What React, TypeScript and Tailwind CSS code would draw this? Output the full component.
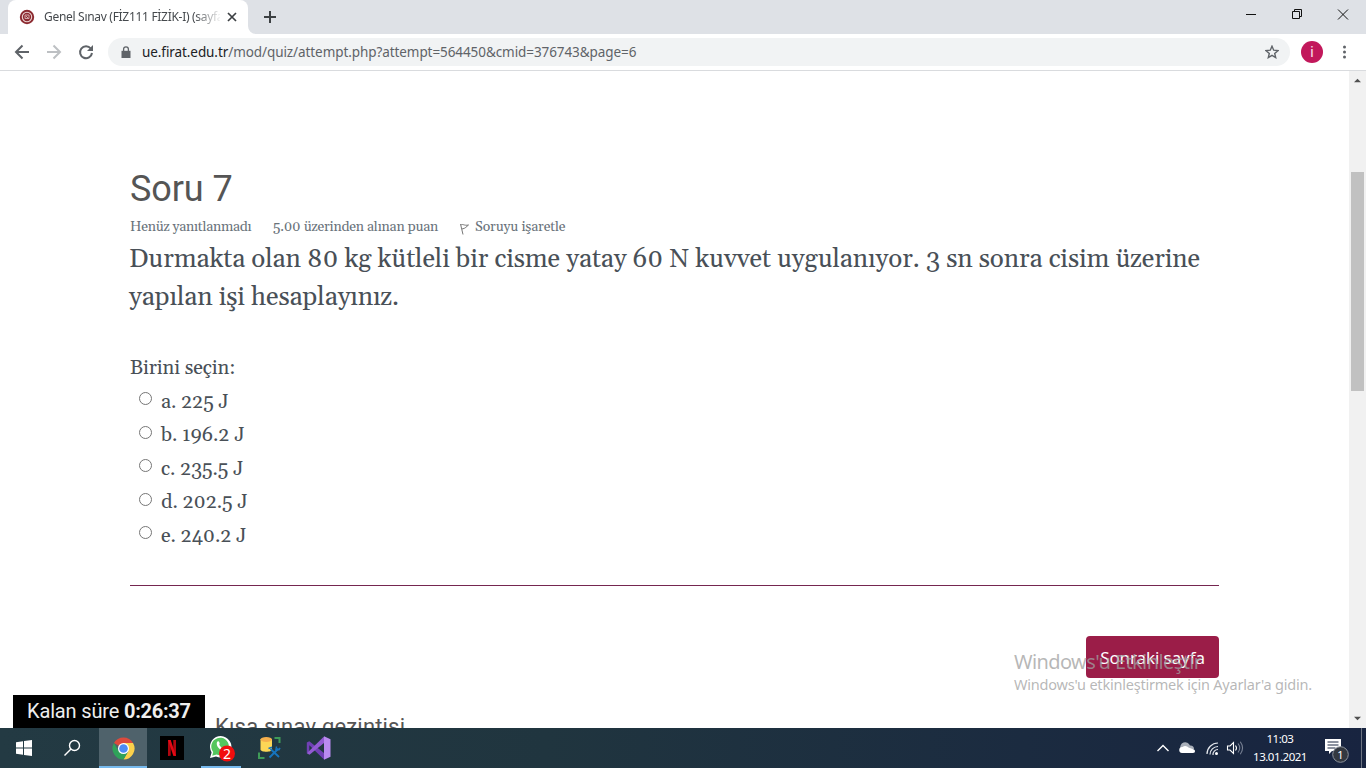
const SERIF = "font-[Gelasio,Georgia,'Liberation_Serif',serif]";
const UI = "font-['Noto_Sans','Open_Sans',sans-serif]";

function TabStrip() {
  return (
    <div className="flex h-[34px] shrink-0 bg-[#dee1e6] pl-2">
      <div className="flex w-[240px] items-center rounded-t-lg bg-white pl-[11px]">
        <svg width="16" height="16" viewBox="0 0 16 16" className="shrink-0">
          <circle cx="8" cy="8" r="7.2" fill="#8c2a30" />
          <circle cx="8" cy="8" r="4.700" fill="none" stroke="#ead2d2" strokeWidth="1.100" />
          <path d="M6 6h4v3.500H6zM7 7l2 2" stroke="#d9b3b3" strokeWidth="0.900" fill="none" />
        </svg>
        <div className="ml-[9px] w-[176px] overflow-hidden whitespace-nowrap text-[12px] tracking-[-0.3px] text-[#45494d] [mask-image:linear-gradient(to_right,black_150px,transparent_178px)]">
          Genel Sınav (FİZ111 FİZİK-I) (sayfa
        </div>
        <svg width="10" height="10" viewBox="0 0 10 10" className="ml-[7px] shrink-0" stroke="#3c4043" strokeWidth="1.700">
          <path d="M1 1l8 8M9 1L1 9" />
        </svg>
      </div>
      <svg width="8" height="34" viewBox="0 0 8 34"><path d="M0 26a8 8 0 0 0 8 8H0z" fill="#fff" /></svg>
      <svg width="14" height="14" viewBox="0 0 14 14" className="mt-[10px] ml-[7px]" stroke="#3c4043" strokeWidth="2">
        <path d="M1 7h12M7 1v12" />
      </svg>
      <svg width="104" height="14" viewBox="0 0 104 14" className="mt-[7px] mr-[17px] ml-auto" stroke="#111" fill="none">
        <path d="M1 7.500h10M47.500 4.500h7v7h-7zM49.500 4.500v-2h7v7h-2M93 2.500l10 10M103 2.500l-10 10" />
      </svg>
    </div>
  );
}

function Toolbar() {
  return (
    <div className="flex h-[37px] shrink-0 items-center border-b border-[#d9dbde] bg-white pl-[14px]">
      <svg width="80" height="18" viewBox="0 0 80 18" fill="none" strokeWidth="2" className="shrink-0">
        <path d="M15 9H2M8.500 2.500L2 9l6.500 6.500" stroke="#5f6368" />
        <path d="M33 9h13M39.500 2.500L46 9l-6.500 6.500" stroke="#bdc0c3" />
        <path d="M76.800 5.500A6 6 0 1 0 78 10" stroke="#5f6368" />
        <path d="M79 2v6h-6z" fill="#5f6368" />
      </svg>
      <div className="ml-[14px] flex h-[28px] w-[1182px] items-center rounded-full bg-[#f1f3f4] pl-[13px]">
        <svg width="10" height="13" viewBox="0 0 10 13"><path d="M0.500 4.800h9V12h-9z" fill="#5f6368" /><path d="M2.600 5V3.300a2.400 2.400 0 0 1 4.800 0V5" fill="none" stroke="#5f6368" strokeWidth="1.300" /></svg>
        <div className="ml-[11px] text-[13.5px] tracking-[-0.08px] whitespace-nowrap text-[#5f6368]">
          <span className="text-[#202124]">ue.firat.edu.tr</span>/mod/quiz/attempt.php?attempt=564450&amp;cmid=376743&amp;page=6
        </div>
        <svg width="14" height="14" viewBox="0 0 14 14" className="mr-[11px] ml-auto" fill="none" stroke="#5f6368" strokeWidth="1.400">
          <path d="M7 1.200l1.700 4 4.300.4-3.300 2.800 1 4.200L7 10.400l-3.700 2.200 1-4.200L1 5.600l4.300-.4z" />
        </svg>
      </div>
      <div className="ml-[11px] flex size-[22px] items-center justify-center rounded-full bg-[#c2185b] font-[Roboto,sans-serif] text-[14px] text-white/90">i</div>
      <svg width="4" height="14" viewBox="0 0 4 14" className="ml-[20px]" fill="#5f6368">
        <circle cx="1.500" cy="2" r="1.500" /><circle cx="1.500" cy="7" r="1.500" /><circle cx="1.500" cy="12" r="1.500" />
      </svg>
    </div>
  );
}

const OPTIONS = ["a. 225 J", "b. 196.2 J", "c. 235.5 J", "d. 202.5 J", "e. 240.2 J"];

function Question() {
  return (
    <main className={`relative flex min-w-0 flex-1 flex-col overflow-hidden bg-white pr-[130px] pl-[130px] text-[#495057] ${SERIF}`}>
      <h1 className="mt-[95px] h-[46px] font-[Roboto,sans-serif] text-[36px] leading-[46px] tracking-[-0.1px] text-[#555]">Soru 7</h1>
      <div className="mt-[6px] flex h-[18px] items-center text-[14px] leading-[18px] tracking-[-0.26px] whitespace-nowrap text-[#6a737b]">
        <span className="w-[143px]">Henüz yanıtlanmadı</span>
        <span className="w-[187px] tracking-[-0.22px] [font-variant-numeric:oldstyle-nums]">5.00 üzerinden alınan puan</span>
        <svg width="10" height="12" viewBox="0 0 10 12" className="mt-1 mr-[5px]" fill="none" stroke="#777" strokeWidth="1">
          <path d="M0.500 1l2.500 10.500M1 2c2-1.500 3 1 7.500 0-2 1.500-3 3.500-6.500 4" />
        </svg>
        <span className="tracking-[-0.16px]">Soruyu işaretle</span>
      </div>
      <div className="mt-[5px] -ml-px text-[26px] leading-[38px] tracking-[-0.11px] whitespace-nowrap [font-variant-numeric:oldstyle-nums]">
        <div className="h-[38px]">Durmakta olan 80 kg kütleli bir cisme yatay 60 N kuvvet uygulanıyor. 3 sn sonra cisim üzerine</div>
        <div className="h-[38px]">yapılan işi hesaplayınız.</div>
      </div>
      <div className="mt-[34px] h-[34px] text-[20px] leading-[34px] tracking-[-0.12px]">Birini seçin:</div>
      <div className="-mt-px text-[20px] tracking-[-0.1px] [font-variant-numeric:oldstyle-nums]">
        {OPTIONS.map((o) => (
          <div key={o} className="flex h-[33.6px] pl-[9px]">
            <span className="mt-[8px] mr-[9px] size-[13px] rounded-full border border-[#767676] bg-white" />
            <span className="pt-[1.6px] leading-[33.600px] whitespace-nowrap">{o}</span>
          </div>
        ))}
      </div>
      <div className="mt-[33px] h-px w-[1089px] shrink-0 bg-[#752650]" />
      <button className={`mt-[50px] ml-[956px] h-[42px] w-[133px] shrink-0 rounded bg-[#9b1d48] pt-px text-[17px] tracking-[-0.1px] text-white ${UI}`}>Sonraki sayfa</button>
      <div className="mt-[33px] ml-[85px] shrink-0 font-[Roboto,sans-serif] text-[22px] leading-[32px] tracking-[0.18px] whitespace-nowrap text-[#555]">Kısa sınav gezintisi</div>
      <div className="absolute bottom-0 left-[13px] h-[33px] w-[192px] bg-black pl-[14px] font-[Roboto,sans-serif] text-[20px] leading-[33px] tracking-[-0.15px] whitespace-nowrap text-[#eee]">
        Kalan süre <b className="tracking-[-0.3px]">0:26:37</b>
      </div>
      <div className={`absolute top-[577px] left-[1014px] whitespace-nowrap text-[#a0a0a0]/75 ${UI}`}>
        <div className="text-[20px] leading-[28px] tracking-[-0.6px]">Windows'u Etkinleştir</div>
        <div className="text-[14.5px] leading-[17px] tracking-[-0.21px]">Windows'u etkinleştirmek için Ayarlar'a gidin.</div>
      </div>
    </main>
  );
}

function ScrollBar() {
  return (
    <div className="flex w-[17px] shrink-0 flex-col items-center bg-[#f1f1f1] py-[7px]">
      <svg width="7" height="5" viewBox="0 0 8 5"><path d="M0 4.500L4 .5l4 4z" fill="#505050" /></svg>
      <div className="mt-[89px] h-[219px] w-[13px] bg-[#c1c1c1]" />
      <svg width="7" height="5" viewBox="0 0 8 5" className="mt-auto"><path d="M0 .5l4 4 4-4z" fill="#505050" /></svg>
    </div>
  );
}

function Taskbar() {
  return (
    <footer className="flex h-[40px] shrink-0 bg-[linear-gradient(to_right,#233a43,#20353f_40%,#1b2b40_75%,#182440)] text-white">
      <div className="flex w-[51px] items-center pl-4">
        <svg width="16" height="16" viewBox="0 0 16 16" fill="#fff"><path d="M0 2.200l7-1V7.500H0zM8 1.100L16 0v7.500H8zM0 8.500h7v6.300l-7-1zM8 8.500h8V16l-8-1.100z" /></svg>
      </div>
      <div className="flex w-[48px] items-center pl-[12px]">
        <svg width="18" height="18" viewBox="0 0 18 18" fill="none" stroke="#fff" strokeWidth="1.400"><circle cx="11.500" cy="6.500" r="5" /><path d="M8 10l-6.500 6.500" /></svg>
      </div>
      <div className="flex w-[48px] items-center justify-center border-b-2 border-[#76b9ed] bg-[#4f626b]">
        <svg width="23" height="23" viewBox="0 0 24 24" className="mt-[2px]">
          <path d="M12 12L2.040 6.250A11.500 11.500 0 0 1 21.960 6.250L12 6.250z" fill="#dc4a3d" />
          <path d="M12 12V6.250h9.960A11.500 11.500 0 0 1 12 23.500L17 14.900z" fill="#fbd04b" />
          <path d="M2.040 6.250L7 14.900 12 17.750l5-2.900L12 23.500A11.500 11.500 0 0 1 2.040 6.250z" fill="#2fa25a" />
          <circle cx="12" cy="12" r="5.750" fill="#fff" /><circle cx="12" cy="12" r="4.500" fill="#4c8bf5" />
        </svg>
      </div>
      <div className="flex w-[50px] items-center justify-center">
        <svg width="24" height="24" viewBox="0 0 24 24"><path d="M0 0h24v24H0z" fill="#000" /><path d="M8 4h2.700v15.700L8 20zM13.300 4H16v16l-2.700-.3z" fill="#b1060f" /><path d="M8 4h2.700L16 20l-2.700-.3z" fill="#e50914" /></svg>
      </div>
      <div className="ml-[4px] flex w-[40px] items-center border-b-2 border-[#76b9ed] pl-[8px]">
        <svg width="28" height="28" viewBox="0 0 28 28" className="mt-[3px] shrink-0">
          <path d="M1 23l1.600-5.600A10.700 10.700 0 1 1 7 21.400z" fill="#fff" />
          <path d="M3.200 20.700l1-3.700A8.800 8.800 0 1 1 7.600 19.600z" fill="#54c65e" />
          <path d="M8 7c1-1.400 2-.9 2.600.9.400 1-.7 1.300-.2 2.100.9 1.700 2 2.500 3.600 3.200.9.100 1.200-1.500 2-1.100 2 .9 2.200 1.100 1.700 2.300C15.500 18.500 6 13 8 7z" fill="#fff" />
          <circle cx="18" cy="18.500" r="8" fill="#f20d0d" />
          <text x="18" y="23.500" textAnchor="middle" fontSize="14" fill="#fff" fontFamily="Noto Sans">2</text>
        </svg>
      </div>
      <div className="flex w-[49px] items-center pl-[17px]">
        <svg width="24" height="24" viewBox="0 0 24 24">
          <path d="M2.500 3v10.500c0 3 11.500 3 11.500 0V3z" fill="#fdd656" /><ellipse cx="8.250" cy="3.500" rx="5.750" ry="2.500" fill="#f6b04d" />
          <path d="M16.500 2H21.500v5M1 16.500v5.500h5.500" fill="none" stroke="#3f9b58" strokeWidth="2" />
          <path d="M12.500 13l8.500 8M20.500 12.500L11.500 21.500" stroke="#1674bd" strokeWidth="1.900" fill="none" />
          <path d="M10.500 12.500l3.500-1.200M18.500 10.500l-.5 3 3 .3 1-2" stroke="#1674bd" strokeWidth="1.500" fill="none" />
        </svg>
      </div>
      <div className="flex w-[50px] items-center pl-[16px]">
        <svg width="25" height="24" viewBox="0 0 25 24">
          <path d="M3.300 5.200L18 17v6.500L3.300 9.300v6.500L.8 17.300V6.500z" fill="#7040b5" />
          <path d="M0.800 17.300L18 .5V7L3.500 18.800z" fill="#925bd3" />
          <path d="M18 .3l6.500 3V20.700l-6.500 3z" fill="#b98af0" />
        </svg>
      </div>
      <div className={`ml-auto flex items-center ${UI}`}>
        <svg width="88" height="18" viewBox="0 0 88 18" fill="none">
          <path d="M1.500 12L7 6.500l5.500 5.500" stroke="#fff" strokeWidth="1.400" />
          <path d="M24.500 10a5 5 0 0 1 9.500-3.500c2.500-.2 4 1.200 4 3.500z" fill="#aab0ba" />
          <path d="M26 14a3 3 0 0 1 .5-6c2-2 5-1 6 .5l4 1.500c3 0 3.500 4 .500 4z" fill="#fff" />
          <path d="M51 15A11 11 0 0 1 62 4M54 15.500A8 8 0 0 1 62 7.500M57 16A5 5 0 0 1 62 10.500" stroke="#e5e8ed" strokeWidth="1.200" />
          <circle cx="60.500" cy="14.500" r="1.500" fill="#fff" />
          <path d="M71.500 7h2.500l3.500-3.500v11L74 11h-2.500z" stroke="#fff" strokeWidth="1.100" />
          <path d="M79.500 6.500q2 2.500 0 5" stroke="#fff" strokeWidth="1.100" />
          <path d="M82 4.500q3.500 4.500 0 9M84.300 2.800q4.500 6.200 0 12.400" stroke="#798294" strokeWidth="1.100" />
        </svg>
        <div className="ml-[6px] w-[60px] text-center text-[11.5px] leading-[18px] tracking-[-0.5px] whitespace-nowrap">
          <div>11:03</div><div>13.01.2021</div>
        </div>
        <svg width="27" height="28" viewBox="0 0 27 28" className="mt-[6px] ml-[14px]">
          <path d="M1 2h16v12H8l-3 3v-3H1z" fill="#fff" /><path d="M3.500 5h11M3.500 8h11M3.500 11h8" stroke="#1a2740" strokeWidth="1" />
          <circle cx="16.500" cy="17.500" r="7.800" fill="#333840" stroke="#8c929b" />
          <text x="16.500" y="21.500" textAnchor="middle" fontSize="11" fill="#fff" fontFamily="Noto Sans">1</text>
        </svg>
        <div className="ml-[10px] h-full w-px bg-[#6d7482]" />
        <div className="w-[4px]" />
      </div>
    </footer>
  );
}

export default function App() {
  return (
    <div className={`flex h-[768px] w-[1366px] flex-col overflow-hidden bg-white ${UI}`}>
      <TabStrip />
      <Toolbar />
      <div className="flex min-h-0 flex-1"><Question /><ScrollBar /></div>
      <Taskbar />
    </div>
  );
}
